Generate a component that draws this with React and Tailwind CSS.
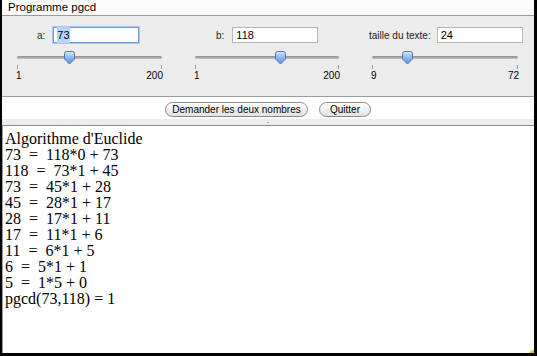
import React from "react";

const UI_FONT = { fontFamily: '"Liberation Sans", Arial, sans-serif' };

const FIELDS = [
  { label: "a:", value: "73", focused: true, labelPad: "pl-[35px]", gap: "ml-[8px]", min: "1", max: "200", pos: 0.36, slidePad: "pl-[15px]", w: "w-[145px]" },
  { label: "b:", value: "118", labelPad: "pl-[37px]", gap: "ml-[8px]", min: "1", max: "200", pos: 0.59, slidePad: "pl-[16px]", w: "w-[144px]" },
  { label: "taille du texte:", value: "24", labelPad: "pl-[13px]", gap: "ml-[6px]", min: "9", max: "72", pos: 0.24, slidePad: "pl-[16px]", w: "w-[146px]" },
];

const LINES = [
  "Algorithme d'Euclide",
  "73  =  118*0 + 73",
  "118  =  73*1 + 45",
  "73  =  45*1 + 28",
  "45  =  28*1 + 17",
  "28  =  17*1 + 11",
  "17  =  11*1 + 6",
  "11  =  6*1 + 5",
  "6  =  5*1 + 1",
  "5  =  1*5 + 0",
  "pgcd(73,118) = 1",
];

function Thumb() {
  return (
    <svg width="13" height="14" viewBox="0 0 13 14">
      <defs>
        <linearGradient id="tg" x1="0" y1="0" x2="0" y2="1">
          <stop offset="0" stopColor="#d6e6fb" />
          <stop offset="0.5" stopColor="#8fb6ec" />
          <stop offset="1" stopColor="#5a8fdc" />
        </linearGradient>
      </defs>
      <path d="M1.5 2.5 Q1.5 0.5 3.5 0.5 H9.5 Q11.5 0.5 11.5 2.5 V8 L6.5 13 L1.5 8 Z" fill="url(#tg)" stroke="#4d78b8" strokeWidth="1" />
    </svg>
  );
}

function Slider({ min, max, pos, w }) {
  return (
    <div className={`${w} flex flex-col`}>
      <div className="relative h-[14px]">
        <div className="absolute left-0 right-0 top-[5px] h-[3px] rounded-full bg-gradient-to-b from-[#8e8e8e] to-[#c4c4c4]" />
        <div className="absolute top-0" style={{ left: `calc(${pos * 100}% - 6px)` }}>
          <Thumb />
        </div>
      </div>
      <div className="flex justify-between h-[5px]">
        <div className="w-px h-[4px] bg-[#a0a0a0]" />
        <div className="w-px h-[4px] bg-[#a0a0a0]" />
      </div>
      <div className="flex justify-between text-[10px] leading-[12px] text-black -mx-[1px]" style={UI_FONT}>
        <span>{min}</span>
        <span>{max}</span>
      </div>
    </div>
  );
}

function Field({ label, value, focused, labelPad, gap }) {
  return (
    <div className={`flex items-center h-[16px] ${labelPad}`}>
      <span className="text-[10px] text-[#222] whitespace-nowrap" style={UI_FONT}>{label}</span>
      <div
        className={`${gap} w-[86px] h-[16px] bg-white flex items-center px-[3px] text-[11px] ${focused ? "border border-[#6f9ad6] shadow-[0_0_0_1px_#a9c6ee]" : "border border-[#b5b5b5]"}`}
        style={UI_FONT}
      >
        <span className={focused ? "bg-[#b5d5ff]" : ""}>{value}</span>
      </div>
    </div>
  );
}

function PillButton({ children, w }) {
  return (
    <button
      className={`${w} h-[15px] rounded-full border border-[#8a8a8a] bg-gradient-to-b from-white to-[#e2e2e2] text-[10px] leading-[13px] text-black whitespace-nowrap`}
      style={UI_FONT}
    >
      {children}
    </button>
  );
}

export default function App() {
  return (
    <div className="w-[537px] h-[356px] bg-black flex flex-col">
      <div className="flex-1 flex flex-col ml-[2px] mr-[3px] mb-[3px] bg-[#ececec] overflow-hidden">
        <div className="h-[16px] bg-[#fbfbfb] border-b border-[#9a9a9a] flex items-center pl-[6px] text-[11.5px] text-black" style={UI_FONT}>
          Programme pgcd
        </div>
        <div className="flex pt-[11px] h-[81px] border-b border-[#9c9c9c]">
          {FIELDS.map((f) => (
            <div key={f.label} className="w-[177px] flex flex-col">
              <Field {...f} />
              <div className={`${f.slidePad} pt-[8px]`}>
                <Slider {...f} />
              </div>
            </div>
          ))}
        </div>
        <div className="h-[22px] bg-white flex items-center justify-center gap-[11px] pt-[2px]">
          <PillButton w="w-[143px]">Demander les deux nombres</PillButton>
          <PillButton w="w-[52px]">Quitter</PillButton>
        </div>
        <div className="h-[7px] bg-[#ececec] flex justify-center items-center border-b border-[#8c8c8c]">
          <div className="w-[2px] h-[1px] bg-[#aaa]" />
        </div>
        <div className="flex-1 bg-white border-l border-[#a0a0a0] pl-[2px] pt-[5px]">
          {LINES.map((l, i) => (
            <div
              key={i}
              className="text-[16px] leading-[16px] h-[16px] text-black whitespace-pre"
              style={{ fontFamily: '"Liberation Serif", "Times New Roman", serif' }}
            >
              {l}
            </div>
          ))}
        </div>
        <div className="relative h-0">
          <div className="absolute right-[-4px] bottom-[-6px] w-[9px] h-[9px] rounded-full bg-[#f5c518]" />
        </div>
      </div>
    </div>
  );
}
